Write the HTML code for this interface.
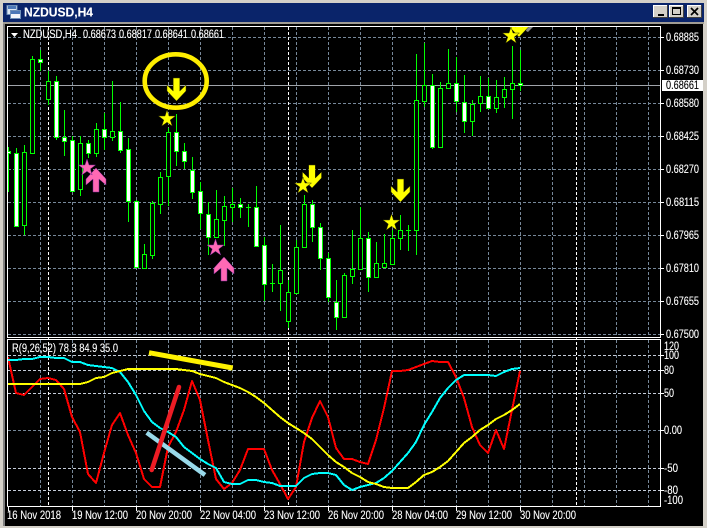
<!DOCTYPE html>
<html><head><meta charset="utf-8"><style>
html,body{margin:0;padding:0;background:#000;overflow:hidden}
svg{display:block}
text{font-family:"Liberation Sans",sans-serif;font-size:11.5px;fill:#fff;stroke:#fff;stroke-width:.12}
</style></head><body>
<svg width="707" height="528" viewBox="0 0 707 528" xmlns="http://www.w3.org/2000/svg">
<defs><clipPath id="m"><rect x="8" y="27" width="652" height="310"/></clipPath></defs>
<rect width="707" height="528" fill="#d4d0c8"/>
<rect x="3" y="3" width="701" height="19" fill="#0a246a"/>
<rect x="3" y="22" width="701" height="2" fill="#a09c94"/>
<rect x="3" y="24" width="3" height="502" fill="#808080"/>
<rect x="5" y="24" width="698" height="502" fill="#000"/>
<!-- title icon -->
<g shape-rendering="crispEdges">
<rect x="7" y="5.5" width="10" height="9" fill="#dfe8f4" stroke="#6f8fb8"/>
<rect x="8" y="6" width="8" height="3" fill="#4d78b8"/>
<rect x="10.5" y="10.5" width="10" height="8" fill="#f4f6fb" stroke="#6f8fb8"/>
<rect x="11" y="11" width="9" height="3" fill="#4d78b8"/>
</g>
<text x="24" y="16.5" style="font-weight:bold;font-size:13px" textLength="69" lengthAdjust="spacingAndGlyphs">NZDUSD,H4</text>
<!-- buttons -->
<g shape-rendering="crispEdges">
<rect x="653" y="5" width="15" height="13" fill="#d4d0c8"/><path d="M653.5 18V5.5H668" stroke="#fff" fill="none"/><path d="M653 17.5H667.5V5" stroke="#404040" fill="none"/>
<rect x="658" y="14" width="6" height="2" fill="#000"/>
<rect x="669" y="5" width="15" height="13" fill="#d4d0c8"/><path d="M669.5 18V5.5H684" stroke="#fff" fill="none"/><path d="M669 17.5H683.5V5" stroke="#404040" fill="none"/>
<rect x="672.5" y="7.5" width="8" height="7" fill="none" stroke="#000"/><rect x="672" y="7" width="9" height="2" fill="#000"/>
<rect x="687" y="5" width="15" height="13" fill="#d4d0c8"/><path d="M687.5 18V5.5H702" stroke="#fff" fill="none"/><path d="M687 17.5H701.5V5" stroke="#404040" fill="none"/>
</g>
<path d="M691 8L698 15M698 8L691 15" stroke="#000" stroke-width="1.7"/>

<!-- grid -->
<g shape-rendering="crispEdges" stroke="#778899" fill="none" stroke-dasharray="3 2">
<path d="M8 37.5H660M8 70.5H660M8 103.5H660M8 136.5H660M8 169.5H660M8 202.5H660M8 235.5H660M8 268.5H660M8 301.5H660M8 334.5H660M8 430.5H660"/>
<path d="M40.5 27V337M72.5 27V337M104.5 27V337M136.5 27V337M168.5 27V337M200.5 27V337M232.5 27V337M264.5 27V337M296.5 27V337M328.5 27V337M360.5 27V337M392.5 27V337M424.5 27V337M456.5 27V337M488.5 27V337M520.5 27V337M552.5 27V337M584.5 27V337M616.5 27V337M648.5 27V337"/>
<path d="M40.5 340V506M72.5 340V506M104.5 340V506M136.5 340V506M168.5 340V506M200.5 340V506M232.5 340V506M264.5 340V506M296.5 340V506M328.5 340V506M360.5 340V506M392.5 340V506M424.5 340V506M456.5 340V506M488.5 340V506M520.5 340V506M552.5 340V506M584.5 340V506M616.5 340V506M648.5 340V506"/>
</g>
<g shape-rendering="crispEdges" stroke="#c4ccd8" fill="none" stroke-dasharray="3 2">
<path d="M8 355.5H660M8 370.5H660M8 393.5H660M8 468.5H660M8 490.5H660"/>
</g>
<path shape-rendering="crispEdges" d="M48.5 27V506M288.5 27V506M576.5 27V506" stroke="#fff" fill="none" stroke-dasharray="3 2"/>
<path shape-rendering="crispEdges" d="M8 85.5H660" stroke="#a0a4aa"/>

<!-- candles -->
<g clip-path="url(#m)" shape-rendering="crispEdges" stroke="#00ff00">
<path fill="none" d="M8.5 147V192M16.5 148V226M24.5 145V235M32.5 56V153M40.5 50V71M48.5 71V105M56.5 76V140M64.5 110V156M72.5 136V191M80.5 136V196M88.5 140V158M96.5 123V157M104.5 113V150M112.5 81V141M120.5 102V153M128.5 138V222M136.5 200V268M144.5 244V269M152.5 201V259M160.5 172V214M168.5 128V206M176.5 114V166M184.5 143V169M192.5 157V199M200.5 182V229M208.5 202V255M216.5 190V237M224.5 196V246M232.5 188V222M240.5 198V218M248.5 204V227M256.5 186V246M264.5 237V301M272.5 264V292M280.5 225V311M288.5 280V328M296.5 240V293M304.5 195V247M312.5 200V242M320.5 223V270M328.5 253V302M336.5 280V330M344.5 273V317M352.5 230V284M360.5 207V269M368.5 232V292M376.5 242V277M384.5 234V268M392.5 230V265M400.5 215V250M408.5 225V251M416.5 54V255M424.5 43V107M432.5 74V149M440.5 82V147M448.5 49V89M456.5 57V112M464.5 75V133M472.5 100V136M480.5 76V112M488.5 78V109M496.5 80V113M504.5 77V108M512.5 46V119M520.5 50V91"/>
<path fill="none" d="M246 207.5H251M270 283.5H275M406 230.5H411"/>
<g fill="#000">
<rect x="22.5" y="152.5" width="4" height="73"/><rect x="30.5" y="59.5" width="4" height="94"/><rect x="46.5" y="81.5" width="4" height="18"/><rect x="78.5" y="143.5" width="4" height="46"/><rect x="94.5" y="129.5" width="4" height="24"/><rect x="110.5" y="131.5" width="4" height="6"/><rect x="142.5" y="254.5" width="4" height="14"/><rect x="150.5" y="203.5" width="4" height="52"/><rect x="158.5" y="177.5" width="4" height="27"/><rect x="166.5" y="132.5" width="4" height="44"/><rect x="214.5" y="219.5" width="4" height="18"/><rect x="222.5" y="206.5" width="4" height="14"/><rect x="230.5" y="204.5" width="4" height="3"/><rect x="278.5" y="270.5" width="4" height="13"/><rect x="286.5" y="292.5" width="4" height="29"/><rect x="294.5" y="247.5" width="4" height="46"/><rect x="302.5" y="204.5" width="4" height="43"/><rect x="342.5" y="275.5" width="4" height="42"/><rect x="350.5" y="269.5" width="4" height="7"/><rect x="358.5" y="238.5" width="4" height="31"/><rect x="374.5" y="263.5" width="4" height="14"/><rect x="382.5" y="263.5" width="4" height="4"/><rect x="390.5" y="238.5" width="4" height="26"/><rect x="398.5" y="230.5" width="4" height="8"/><rect x="414.5" y="100.5" width="4" height="130"/><rect x="422.5" y="85.5" width="4" height="16"/><rect x="438.5" y="88.5" width="4" height="59"/><rect x="446.5" y="83.5" width="4" height="5"/><rect x="470.5" y="104.5" width="4" height="17"/><rect x="478.5" y="96.5" width="4" height="7"/><rect x="494.5" y="97.5" width="4" height="11"/><rect x="502.5" y="89.5" width="4" height="8"/><rect x="510.5" y="83.5" width="4" height="6"/>
</g>
<g fill="#fff">
<rect x="6.5" y="151.5" width="4" height="2"/><rect x="14.5" y="153.5" width="4" height="73"/><rect x="38.5" y="59.5" width="4" height="3"/><rect x="54.5" y="81.5" width="4" height="56"/><rect x="62.5" y="137.5" width="4" height="4"/><rect x="70.5" y="140.5" width="4" height="51"/><rect x="86.5" y="143.5" width="4" height="10"/><rect x="102.5" y="129.5" width="4" height="8"/><rect x="118.5" y="131.5" width="4" height="19"/><rect x="126.5" y="149.5" width="4" height="52"/><rect x="134.5" y="201.5" width="4" height="66"/><rect x="174.5" y="132.5" width="4" height="19"/><rect x="182.5" y="151.5" width="4" height="10"/><rect x="190.5" y="170.5" width="4" height="22"/><rect x="198.5" y="191.5" width="4" height="22"/><rect x="206.5" y="214.5" width="4" height="23"/><rect x="238.5" y="204.5" width="4" height="3"/><rect x="254.5" y="207.5" width="4" height="39"/><rect x="262.5" y="245.5" width="4" height="39"/><rect x="310.5" y="204.5" width="4" height="23"/><rect x="318.5" y="227.5" width="4" height="31"/><rect x="326.5" y="258.5" width="4" height="39"/><rect x="334.5" y="302.5" width="4" height="15"/><rect x="366.5" y="238.5" width="4" height="39"/><rect x="430.5" y="85.5" width="4" height="62"/><rect x="454.5" y="83.5" width="4" height="18"/><rect x="462.5" y="102.5" width="4" height="19"/><rect x="486.5" y="96.5" width="4" height="12"/><rect x="518.5" y="83.5" width="4" height="2"/>
</g>
</g>

<!-- arrows and stars -->
<g clip-path="url(#m)">
<polygon points="527,27 533,27 528,32 526,31" fill="#8a8a8a"/>
<g fill="#ffff00" stroke="#3a3a00" stroke-width=".5">
<polygon points="173.2,78 179.8,78 179.8,91 186,85 186,91 176.5,101 167,91 167,85 173.2,91"/>
<polygon points="308.7,165 315.3,165 315.3,178 321.5,172 321.5,178 312,188 302.5,178 302.5,172 308.7,178"/>
<polygon points="397.2,179 403.8,179 403.8,192 410,186 410,192 400.5,202 391,192 391,186 397.2,192"/>
<polygon points="515.7,14 522.3,14 522.3,27 528.5,21 528.5,27 519,37 509.5,27 509.5,21 515.7,27"/>
<polygon points="167,110 169,116 175.5,116 170.2,120 172.2,126 167,122.3 161.8,126 163.8,120 158.5,116 165,116"/>
<polygon points="303,177 305,183 311.5,183 306.2,187 308.2,193 303,189.3 297.8,193 299.8,187 294.5,183 301,183"/>
<polygon points="391.5,214 393.5,220 400,220 394.7,224 396.7,230 391.5,226.3 386.3,230 388.3,224 383,220 389.5,220"/>
<polygon points="511,27 513,33 519.5,33 514.2,37 516.2,43 511,39.3 505.8,43 507.8,37 502.5,33 509,33"/>
</g>
<g fill="#ff69b4" stroke="#7a2a9a" stroke-width=".5">
<polygon points="93,192 99,192 99,179 106,185 106,179 96,168 86,179 86,185 93,179"/>
<polygon points="221,281 227,281 227,268 234,274 234,268 224,257 214,268 214,274 221,268"/>
<polygon points="87,159 89,165 95.5,165 90.2,169 92.2,175 87,171.3 81.8,175 83.8,169 78.5,165 85,165"/>
<polygon points="215.5,239 217.5,245 224,245 218.7,249 220.7,255 215.5,251.3 210.3,255 212.3,249 207,245 213.5,245"/>
</g>
</g>
<ellipse cx="175.7" cy="81" rx="31" ry="26.7" fill="none" stroke="#ffee00" stroke-width="4.6"/>

<!-- indicator -->
<g fill="none" stroke-width="2" stroke-linejoin="round" shape-rendering="crispEdges">
<polyline stroke="#ff0000" points="8,357 16,393 24,395 32,387 40,379 48,378 56,380 64,389 72,417 80,432 88,474 96,483 104,453 112,425 120,413 128,435 136,453 144,479 152,487 160,487 168,447 176,432 184,410 192,381 200,400 208,440 216,479 224,489 232,483 240,470 248,449 256,449 264,449 272,470 280,484 288,499 296,487 304,442 312,418 320,401 328,417 336,448 344,459 352,459 360,462 368,464 376,440 384,408 392,371 400,371 408,370 416,367 424,364 432,361 440,362 448,362 456,377 464,398 472,427 480,445 488,453 496,430 504,449 512,410 520,371"/>
<polyline stroke="#00ffff" points="8,360 16,360 24,359 32,359 40,357 48,357 56,358 64,358 72,362 80,362 88,365 96,366 104,367 112,368 120,372 128,382 136,395 144,411 152,422 160,428 168,432 176,437 184,447 192,453 200,459 208,464 216,468 224,482 232,484 240,484 248,480 256,480 264,482 272,483 280,486 288,486 296,486 304,478 312,474 320,473 328,473 336,475 344,485 352,490 360,487 368,485 376,483 384,478 392,471 400,462 408,453 416,442 424,425 432,412 440,398 448,388 456,380 464,375 472,375 480,375 488,375 496,376 504,372 512,369 520,368"/>
<polyline stroke="#ffff00" points="8,384 80,384 88,382 96,378 104,377 112,373 120,371 128,369 176,369 184,370 192,371 200,374 208,376 216,378 224,382 232,385 240,388 248,392 256,397 264,403 272,410 280,417 288,423 296,428 304,433 312,439 320,447 328,455 336,462 344,467 352,473 360,477 368,482 376,484 384,487 392,488 408,488 416,482 424,475 432,472 440,467 448,461 456,452 464,443 472,437 480,430 488,425 496,419 504,415 512,410 520,404"/>
</g>
<line x1="149" y1="352.7" x2="232.7" y2="368" stroke="#fff200" stroke-width="5"/>
<line x1="146.7" y1="432.7" x2="205" y2="475" stroke="#99d9ea" stroke-width="4.5"/>
<line x1="151.7" y1="470" x2="179" y2="387" stroke="#ed1c24" stroke-width="4.5" stroke-linecap="round"/>

<!-- borders -->
<path shape-rendering="crispEdges" fill="none" stroke="#fff" d="M7.5 338V26.5H660.5V337.5H7.5M7.5 506.5V339.5H660.5V506.5H7.5"/>
<!-- ticks -->
<path shape-rendering="crispEdges" fill="none" stroke="#fff" d="M661 37.5h3M661 70.5h3M661 103.5h3M661 136.5h3M661 169.5h3M661 202.5h3M661 235.5h3M661 268.5h3M661 301.5h3M661 334.5h3M661 355.5h3M661 370.5h3M661 393.5h3M661 430.5h3M661 468.5h3M661 490.5h3M8.5 507v4M72.5 507v4M136.5 507v4M200.5 507v4M264.5 507v4M328.5 507v4M392.5 507v4M456.5 507v4M520.5 507v4"/>
<polygon points="11,33 18,33 14.5,37" fill="#fff"/>
<rect x="662" y="80" width="41" height="11" fill="#fff"/>

<!-- labels -->
<text x="23" y="38" textLength="54" lengthAdjust="spacingAndGlyphs">NZDUSD,H4</text>
<text x="83" y="38" textLength="33" lengthAdjust="spacingAndGlyphs">0.68673</text>
<text x="119" y="38" textLength="33" lengthAdjust="spacingAndGlyphs">0.68817</text>
<text x="155" y="38" textLength="33" lengthAdjust="spacingAndGlyphs">0.68641</text>
<text x="191" y="38" textLength="33" lengthAdjust="spacingAndGlyphs">0.68661</text>
<text x="12" y="352" textLength="106" lengthAdjust="spacingAndGlyphs">R(9,26,52) 78.3 84.9 35.0</text>

<text x="666" y="41" textLength="33" lengthAdjust="spacingAndGlyphs">0.68885</text>
<text x="666" y="74" textLength="33" lengthAdjust="spacingAndGlyphs">0.68730</text>
<text x="666" y="89" textLength="33" lengthAdjust="spacingAndGlyphs" style="fill:#000;stroke:#000">0.68661</text>
<text x="666" y="107" textLength="33" lengthAdjust="spacingAndGlyphs">0.68580</text>
<text x="666" y="140" textLength="33" lengthAdjust="spacingAndGlyphs">0.68425</text>
<text x="666" y="173" textLength="33" lengthAdjust="spacingAndGlyphs">0.68270</text>
<text x="666" y="206" textLength="33" lengthAdjust="spacingAndGlyphs">0.68115</text>
<text x="666" y="239" textLength="33" lengthAdjust="spacingAndGlyphs">0.67965</text>
<text x="666" y="272" textLength="33" lengthAdjust="spacingAndGlyphs">0.67810</text>
<text x="666" y="305" textLength="33" lengthAdjust="spacingAndGlyphs">0.67655</text>
<text x="666" y="338" textLength="33" lengthAdjust="spacingAndGlyphs">0.67500</text>

<text x="664" y="350" textLength="15" lengthAdjust="spacingAndGlyphs">120</text>
<text x="664" y="359" textLength="15" lengthAdjust="spacingAndGlyphs">100</text>
<text x="664" y="374" textLength="10" lengthAdjust="spacingAndGlyphs">80</text>
<text x="664" y="397" textLength="10" lengthAdjust="spacingAndGlyphs">50</text>
<text x="664" y="434" textLength="18" lengthAdjust="spacingAndGlyphs">0.00</text>
<text x="664" y="472" textLength="14" lengthAdjust="spacingAndGlyphs">-50</text>
<text x="664" y="494" textLength="14" lengthAdjust="spacingAndGlyphs">-80</text>
<text x="664" y="504" textLength="19" lengthAdjust="spacingAndGlyphs">-100</text>

<text x="7" y="519" textLength="54" lengthAdjust="spacingAndGlyphs">16 Nov 2018</text>
<text x="72" y="519" textLength="56" lengthAdjust="spacingAndGlyphs">19 Nov 12:00</text>
<text x="136" y="519" textLength="56" lengthAdjust="spacingAndGlyphs">20 Nov 20:00</text>
<text x="200" y="519" textLength="56" lengthAdjust="spacingAndGlyphs">22 Nov 04:00</text>
<text x="264" y="519" textLength="56" lengthAdjust="spacingAndGlyphs">23 Nov 12:00</text>
<text x="328" y="519" textLength="56" lengthAdjust="spacingAndGlyphs">26 Nov 20:00</text>
<text x="392" y="519" textLength="56" lengthAdjust="spacingAndGlyphs">28 Nov 04:00</text>
<text x="456" y="519" textLength="56" lengthAdjust="spacingAndGlyphs">29 Nov 12:00</text>
<text x="520" y="519" textLength="56" lengthAdjust="spacingAndGlyphs">30 Nov 20:00</text>
</svg>
</body></html>
